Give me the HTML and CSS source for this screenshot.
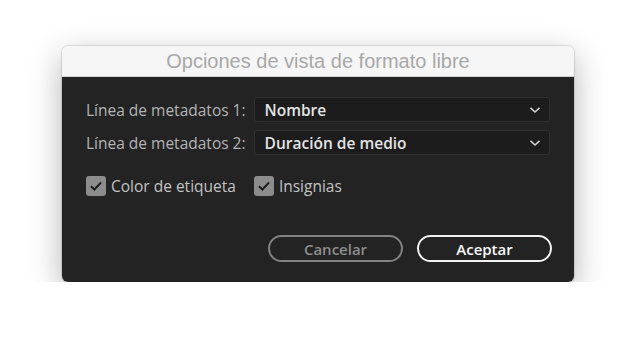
FILE: index.html
```html
<!DOCTYPE html>
<html lang="es">
<head>
    <meta charset="UTF-8">
    <title>Opciones de vista de formato libre</title>
    <link rel="stylesheet" href="styles.css">
</head>
<body>
    <div class="dialog">
        <div class="title-bar">Opciones de vista de formato libre</div>
        <div class="dialog-body">
            <div class="field-grid">
                <label class="field-label">Línea de metadatos 1:</label>
                <div class="dropdown">
                    <span>Nombre</span>
                    <svg class="chevron" width="12" height="8" viewBox="0 0 12 8"><path d="M1.5 1.8 L6 6 L10.5 1.8" fill="none" stroke="#cfcfcf" stroke-width="1.6"/></svg>
                </div>
                <label class="field-label">Línea de metadatos 2:</label>
                <div class="dropdown">
                    <span>Duración de medio</span>
                    <svg class="chevron" width="12" height="8" viewBox="0 0 12 8"><path d="M1.5 1.8 L6 6 L10.5 1.8" fill="none" stroke="#cfcfcf" stroke-width="1.6"/></svg>
                </div>
            </div>

            <div class="check-row">
                <div class="check-item">
                    <span class="checkbox"><svg width="14" height="12" viewBox="0 0 14 12"><path d="M2 6.2 L5.4 9.5 L12 2.5" fill="none" stroke="#1e1e1e" stroke-width="2"/></svg></span>
                    <span>Color de etiqueta</span>
                </div>
                <div class="check-item">
                    <span class="checkbox"><svg width="14" height="12" viewBox="0 0 14 12"><path d="M2 6.2 L5.4 9.5 L12 2.5" fill="none" stroke="#1e1e1e" stroke-width="2"/></svg></span>
                    <span>Insignias</span>
                </div>
            </div>

            <div class="button-row">
                <button class="btn btn-cancel">Cancelar</button>
                <button class="btn btn-ok">Aceptar</button>
            </div>
        </div>
    </div>
</body>
</html>
```

FILE: styles.css
```css
body {
    margin: 0;
    background-color: #fff;
    font-family: "Open Sans", "Noto Sans", sans-serif;
}
.dialog {
    width: 512px;
    margin: 46px 0 0 62px;
    border-radius: 6px;
    overflow: hidden;
    box-shadow: 0 10px 32px rgba(0, 0, 0, 0.3), 0 0 0 1px rgba(0, 0, 0, 0.1);
}
.title-bar {
    height: 30px;
    line-height: 31px;
    background-color: #f6f6f6;
    border-bottom: 1px solid #d2d2d2;
    color: #a8a8a8;
    text-align: center;
    font-family: "Liberation Sans", Arial, sans-serif;
    font-size: 20px;
}
.dialog-body {
    background-color: #232323;
    padding: 20px 24px 20px 24px;
}
.field-grid {
    display: grid;
    grid-template-columns: auto 1fr;
    column-gap: 8px;
    row-gap: 8px;
    align-items: center;
}
.field-label {
    color: #b4b4b4;
    font-size: 15.5px;
}
.dropdown {
    height: 23px;
    display: flex;
    align-items: center;
    justify-content: space-between;
    padding: 0 8px 0 10px;
    background-color: #1c1c1c;
    border: 1px solid #303030;
    border-radius: 3px;
    color: #e4e4e4;
    font-size: 15.5px;
    font-weight: 600;
}
.chevron {
    display: block;
}
.check-row {
    display: flex;
    gap: 18px;
    margin-top: 20px;
}
.check-item {
    display: flex;
    align-items: center;
    gap: 5px;
    color: #c2c2c2;
    font-size: 15.5px;
}
.checkbox {
    width: 20px;
    height: 20px;
    border-radius: 3px;
    background-color: #8c8c8c;
    display: flex;
    align-items: center;
    justify-content: center;
}
.button-row {
    display: flex;
    justify-content: flex-end;
    gap: 14px;
    margin: 38px -2px 0 0;
}
.btn {
    width: 135px;
    height: 27px;
    border-radius: 14px;
    background-color: transparent;
    font-family: "Open Sans", "Noto Sans", sans-serif;
    font-size: 15px;
    font-weight: 600;
    padding: 0;
}
.btn-cancel {
    border: 2px solid #828282;
    color: #8e8e8e;
}
.btn-ok {
    border: 2px solid #f2f2f2;
    color: #fafafa;
}
```
